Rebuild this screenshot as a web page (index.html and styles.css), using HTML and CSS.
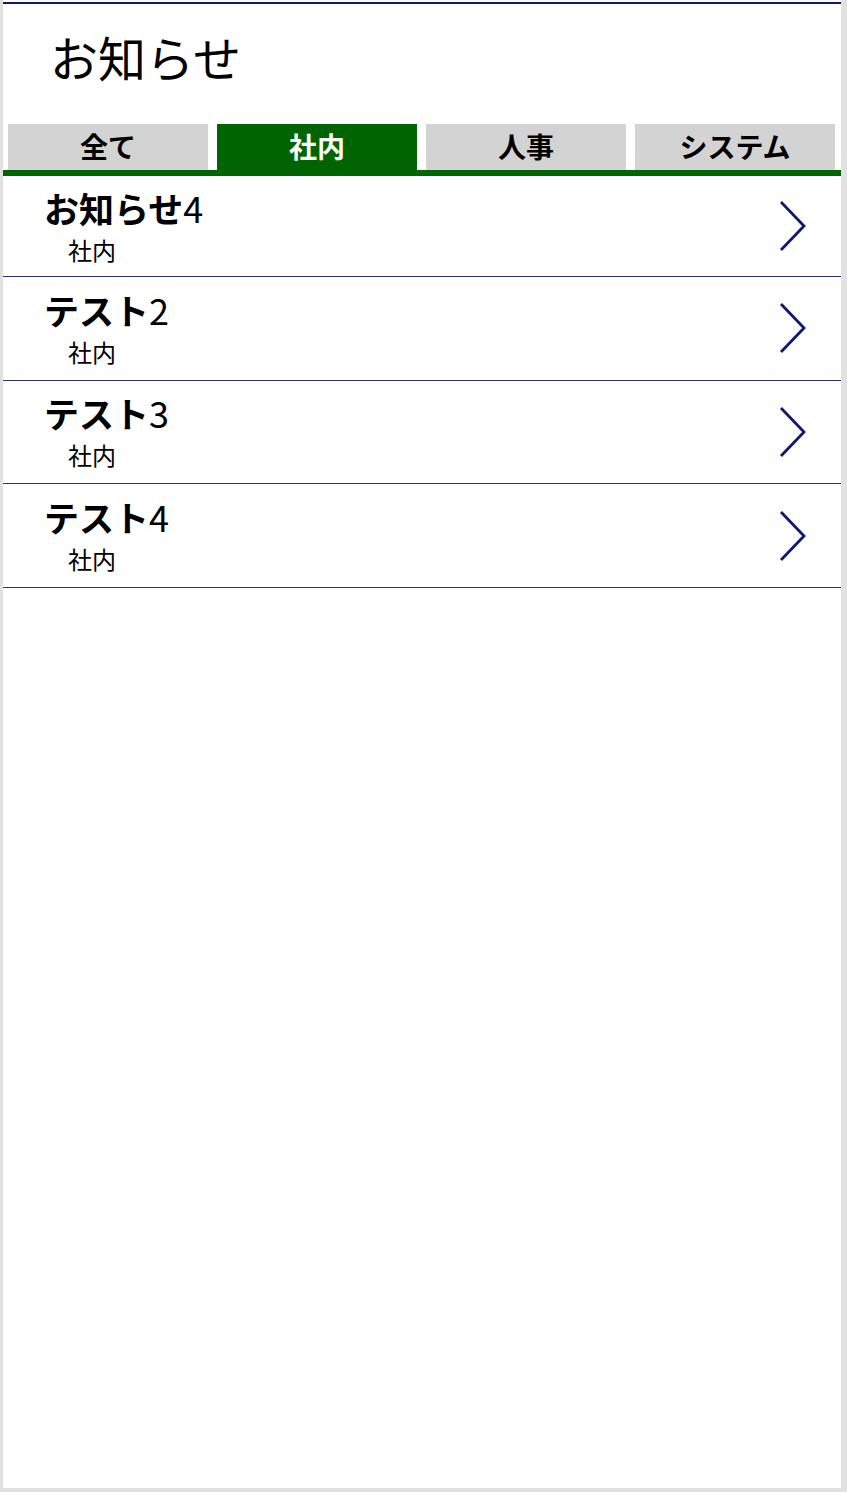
FILE: index.html
```html
<!DOCTYPE html>
<html lang="ja">
<head>
<meta charset="utf-8">
<title>お知らせ</title>
<link rel="stylesheet" href="styles.css">
</head>
<body>
<div class="frame">
  <header class="header">
    <h1 class="title">お知らせ</h1>
  </header>
  <nav class="tabs">
    <div class="tab">全て</div>
    <div class="tab active">社内</div>
    <div class="tab">人事</div>
    <div class="tab">システム</div>
  </nav>
  <ul class="list">
    <li class="row">
      <div class="texts"><div class="item-title">お知らせ<span class="num">4</span></div><div class="item-sub">社内</div></div>
      <svg class="chev" viewBox="0 0 30 54" width="30" height="54"><polyline points="3,3 26,27 3,51" fill="none" stroke="#0d1b6e" stroke-width="2.8"/></svg>
    </li>
    <li class="row">
      <div class="texts"><div class="item-title">テスト<span class="num">2</span></div><div class="item-sub">社内</div></div>
      <svg class="chev" viewBox="0 0 30 54" width="30" height="54"><polyline points="3,3 26,27 3,51" fill="none" stroke="#0d1b6e" stroke-width="2.8"/></svg>
    </li>
    <li class="row">
      <div class="texts"><div class="item-title">テスト<span class="num">3</span></div><div class="item-sub">社内</div></div>
      <svg class="chev" viewBox="0 0 30 54" width="30" height="54"><polyline points="3,3 26,27 3,51" fill="none" stroke="#0d1b6e" stroke-width="2.8"/></svg>
    </li>
    <li class="row">
      <div class="texts"><div class="item-title">テスト<span class="num">4</span></div><div class="item-sub">社内</div></div>
      <svg class="chev" viewBox="0 0 30 54" width="30" height="54"><polyline points="3,3 26,27 3,51" fill="none" stroke="#0d1b6e" stroke-width="2.8"/></svg>
    </li>
  </ul>
</div>
</body>
</html>
```
FILE: styles.css
```css
html, body {
  margin: 0;
  padding: 0;
  background: #e1e1e1;
}
body {
  font-family: "Noto Sans CJK JP", "Noto Sans", sans-serif;
  color: #000;
}
.frame {
  margin-left: 3px;
  width: 838px;
  height: 1488px;
  background: #fff;
  padding-top: 2px;
  box-sizing: border-box;
}
.header {
  border-top: 2px solid #0d1b6e;
  height: 122px;
  box-sizing: border-box;
  padding-left: 47px;
}
.title {
  margin: 0;
  padding-top: 22px;
  font-size: 48px;
  font-weight: 400;
  line-height: 60px;
}
.tabs {
  display: flex;
  gap: 9px;
  padding-left: 5px;
  border-bottom: 6px solid #006400;
}
.tab {
  width: 200px;
  height: 46px;
  background: #d3d3d3;
  font-size: 28px;
  font-weight: 700;
  line-height: 45px;
  text-align: center;
}
.tab.active {
  background: #006400;
  color: #fff;
}
.list {
  list-style: none;
  margin: 0;
  padding: 0;
}
.row {
  display: flex;
  align-items: center;
  justify-content: space-between;
  height: 103.67px;
  box-sizing: border-box;
  border-bottom: 1px solid #2a3575;
  padding: 0 33px 0 41px;
}
.row:first-child {
  height: 101px;
}
.texts {
  display: flex;
  flex-direction: column;
}
.item-title {
  font-size: 35px;
  font-weight: 700;
  line-height: 40px;
}
.item-title .num {
  font-weight: 400;
  font-size: 36px;
}
.item-sub {
  margin-top: 6px;
  font-size: 24px;
  line-height: 32px;
  padding-left: 24px;
}
.chev {
  display: block;
}
```
